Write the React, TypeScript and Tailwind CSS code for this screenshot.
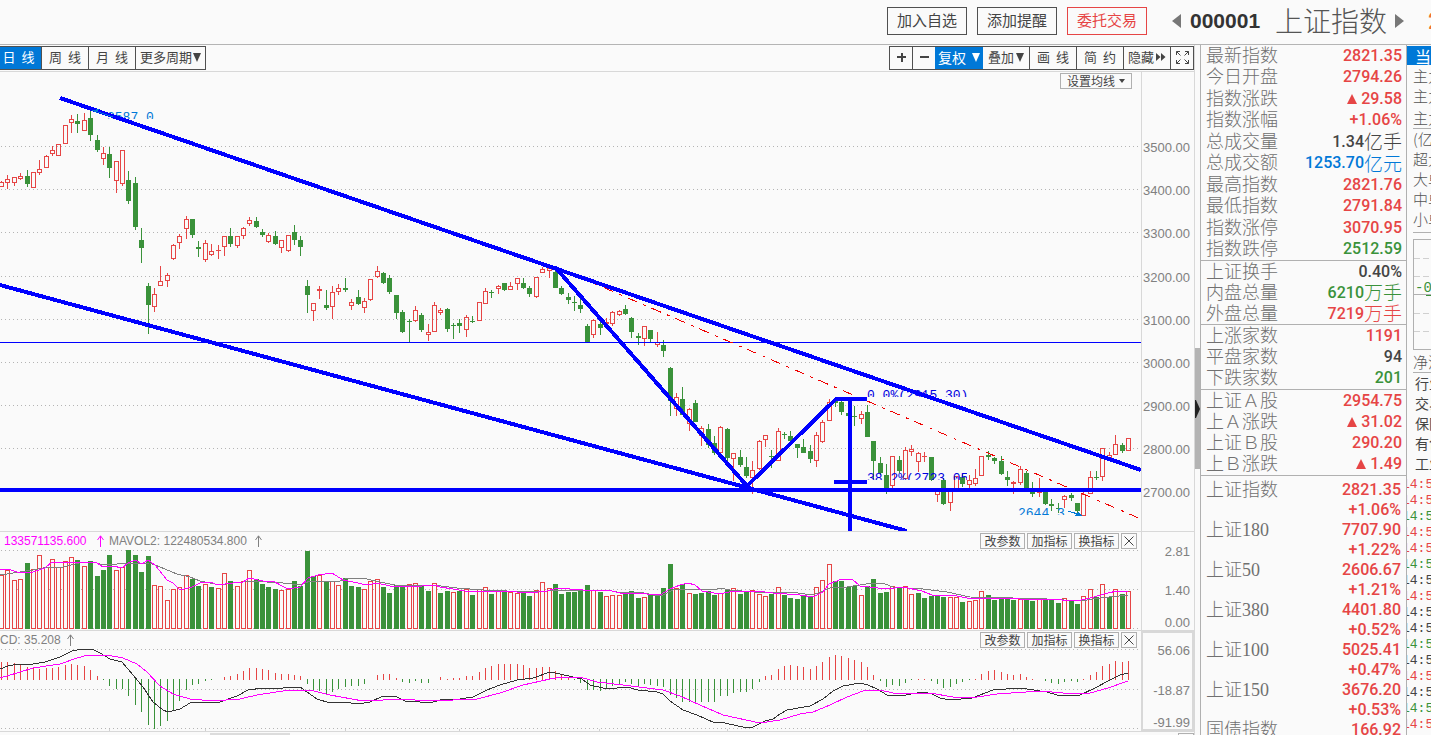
import type { ReactNode } from "react";
import clsx from "clsx";

type Tone = "up" | "down" | "flat" | "info";

// [direction, high, body top, body bottom, low] on the price canvas
type Candle = [number, number, number, number, number];

const candles: Candle[] = [
  [1, 181, 182, 187, 187], [1, 175, 179, 183, 189], [1, 177, 177, 183, 186], [1, 173, 176, 179, 180],
  [0, 170, 176, 184, 187], [1, 172, 172, 188, 188], [1, 160, 169, 173, 175], [1, 155, 156, 168, 168],
  [1, 146, 150, 154, 156], [1, 144, 144, 156, 156], [1, 125, 125, 144, 144], [1, 115, 119, 123, 133],
  [0, 114, 121, 124, 133], [1, 113, 120, 131, 131], [0, 111, 118, 135, 141], [0, 135, 140, 150, 152],
  [1, 147, 153, 159, 165], [0, 147, 154, 168, 178], [1, 161, 161, 181, 193], [1, 150, 150, 184, 186],
  [0, 171, 180, 201, 204], [0, 177, 183, 227, 230], [0, 228, 240, 248, 263], [0, 283, 286, 305, 334],
  [1, 288, 294, 307, 312], [1, 266, 281, 286, 286], [1, 273, 275, 281, 287], [1, 244, 245, 259, 260],
  [1, 234, 236, 243, 249], [1, 216, 219, 229, 239], [0, 219, 219, 235, 238], [0, 241, 247, 249, 257],
  [1, 240, 243, 260, 262], [1, 244, 251, 255, 256], [1, 245, 250, 251, 259], [1, 236, 236, 247, 256],
  [0, 228, 236, 244, 247], [1, 236, 236, 246, 248], [1, 227, 228, 236, 239], [1, 217, 220, 224, 226],
  [0, 217, 221, 227, 228], [0, 229, 232, 235, 237], [1, 233, 235, 242, 243], [0, 231, 236, 244, 245],
  [1, 240, 240, 248, 253], [1, 235, 235, 251, 252], [0, 225, 232, 240, 245], [0, 236, 240, 247, 256],
  [0, 280, 286, 295, 313], [1, 303, 303, 311, 321], [1, 286, 289, 291, 299], [0, 290, 305, 308, 310],
  [1, 286, 292, 307, 319], [1, 284, 288, 292, 295], [0, 278, 288, 290, 292], [1, 299, 302, 306, 310],
  [0, 290, 297, 304, 305], [1, 298, 301, 308, 313], [1, 279, 279, 300, 301], [1, 266, 271, 277, 278],
  [0, 272, 273, 283, 284], [0, 275, 278, 292, 294], [0, 295, 295, 313, 319], [0, 310, 312, 332, 333],
  [0, 319, 321, 322, 342], [1, 306, 310, 321, 322], [0, 313, 315, 330, 332], [1, 324, 332, 335, 341],
  [1, 302, 305, 332, 332], [1, 308, 310, 313, 315], [0, 308, 309, 329, 332], [0, 323, 325, 326, 339],
  [0, 319, 323, 326, 333], [1, 315, 317, 330, 337], [0, 316, 321, 322, 323], [1, 302, 302, 321, 321],
  [1, 288, 291, 304, 304], [0, 290, 292, 293, 298], [1, 285, 286, 289, 294], [0, 283, 283, 290, 291],
  [1, 282, 286, 290, 290], [1, 278, 278, 284, 290], [0, 278, 283, 288, 289], [0, 286, 288, 294, 297],
  [1, 277, 277, 297, 298], [1, 267, 269, 273, 273], [1, 268, 268, 271, 278], [0, 270, 272, 288, 288],
  [0, 286, 288, 294, 295], [0, 293, 297, 300, 304], [0, 296, 302, 303, 311], [0, 299, 305, 309, 313],
  [0, 324, 326, 342, 342], [1, 319, 320, 335, 338], [0, 320, 324, 328, 335], [1, 318, 322, 324, 326],
  [1, 311, 312, 324, 326], [1, 310, 311, 315, 316], [0, 305, 309, 314, 315], [0, 317, 318, 332, 338],
  [0, 333, 336, 338, 345], [1, 326, 326, 339, 346], [0, 330, 330, 339, 342], [1, 332, 342, 345, 347],
  [0, 340, 345, 351, 357], [0, 367, 368, 401, 416], [1, 393, 397, 409, 416], [0, 387, 399, 415, 415],
  [1, 408, 409, 424, 431], [0, 400, 403, 422, 422], [1, 426, 428, 436, 446], [0, 424, 429, 445, 448],
  [0, 436, 443, 453, 455], [1, 426, 427, 453, 454], [0, 428, 429, 458, 462], [1, 453, 453, 459, 481],
  [0, 450, 457, 465, 467], [0, 457, 467, 476, 478], [1, 461, 470, 478, 494], [1, 440, 441, 469, 470],
  [1, 435, 435, 440, 447], [0, 450, 456, 457, 468], [1, 428, 431, 461, 461], [0, 432, 434, 435, 439],
  [0, 431, 436, 441, 441], [0, 444, 444, 448, 458], [0, 439, 447, 453, 453], [0, 445, 451, 459, 463],
  [1, 432, 435, 461, 467], [1, 420, 422, 442, 443], [1, 399, 402, 421, 421], [0, 398, 401, 403, 407],
  [0, 401, 402, 412, 415], [0, 413, 413, 416, 416], [0, 406, 416, 417, 426], [1, 411, 414, 419, 424],
  [0, 405, 412, 437, 437], [0, 441, 441, 461, 479], [0, 457, 463, 473, 475], [0, 464, 475, 488, 494],
  [1, 456, 456, 486, 488], [0, 456, 460, 471, 473], [1, 447, 450, 479, 479], [1, 445, 449, 452, 456],
  [1, 452, 453, 462, 472], [1, 452, 456, 457, 462], [0, 457, 457, 480, 481], [1, 490, 490, 495, 502],
  [0, 478, 480, 504, 505], [1, 490, 490, 503, 511], [1, 476, 476, 490, 490], [0, 474, 477, 484, 487],
  [1, 475, 480, 485, 488], [1, 469, 478, 484, 486], [1, 456, 456, 476, 476], [0, 451, 455, 457, 460],
  [0, 457, 458, 461, 464], [0, 456, 461, 474, 475], [0, 471, 477, 480, 486], [1, 481, 482, 484, 494],
  [1, 466, 469, 483, 485], [0, 471, 473, 488, 488], [0, 482, 488, 494, 497], [1, 478, 492, 493, 497],
  [0, 491, 492, 504, 505], [0, 499, 504, 506, 511], [0, 503, 508, 509, 513], [1, 495, 496, 500, 508],
  [0, 493, 495, 498, 501], [0, 503, 503, 511, 515], [1, 490, 494, 516, 516], [1, 471, 477, 494, 494],
  [0, 471, 477, 478, 480], [1, 448, 448, 477, 481], [1, 452, 455, 458, 460], [1, 435, 444, 455, 455],
  [0, 443, 445, 451, 453], [1, 438, 438, 451, 451],
];

// bar heights, negative on a falling day
const volumes = [
  54, 59, 49, 50, -66, 60, 74, 62, 70, 62, 68, 72, -69, 63, -68, -53, -59, -74, 59, 62, -79, -74, -57, -73, 44,
  43, 29, 40, 42, 54, -50, -43, 45, -42, 41, 56, -48, 43, 48, 59, -50, -45, -42, -40, 39, 40, -48, -43, -78, -53,
  54, -48, 48, 44, -51, -43, -42, 40, 48, 50, -42, -36, -44, -43, 45, 46, -44, -38, 46, -36, -38, 37, -38, 40, -34,
  40, 42, -35, 38, -38, 37, 36, -36, -33, 39, 47, 41, -45, -35, -37, -37, -39, -44, 39, -37, 33, 34, 34, -36, -38,
  -31, 32, -35, -34, -41, -65, 41, -45, 36, -35, -36, -38, -34, 36, -40, 41, -35, -37, 39, 35, 33, -35, 42, -34, -31,
  -30, -34, -33, 42, 49, 65, -48, -48, -42, -43, 34, -43, -50, -36, -37, 43, -42, 43, 35, -36, -31, -33, -34, -32, 32,
  32, -27, 28, 29, 38, -34, -29, -31, -31, -29, 30, -30, -28, 30, -30, -29, -26, 31, -29, -25, 33, 40, -32, 45, -32,
  40, -35, 38,
];

const macd = [
  18, 18, 17, 16, 13, 12, 11, 12, 12, 13, 15, 16, 15, 14, 10, 4, -1, -7, -10, -10, -17, -26, -33, -46, -50,
  -47, -42, -32, -22, -11, -6, -5, -2, -1, 0, 3, 4, 6, 9, 12, 12, 11, 10, 7, 6, 6, 5, 4, -5, -11,
  -12, -15, -13, -10, -8, -7, -7, -5, 0, 5, 6, 6, 2, -3, -4, -2, -4, -4, 0, 3, 1, 2, 2, 4, 4,
  8, 12, 14, 16, 16, 16, 16, 15, 12, 12, 13, 13, 9, 6, 2, -1, -4, -11, -11, -12, -10, -7, -5, -3, -5,
  -7, -5, -6, -7, -8, -16, -19, -23, -23, -23, -23, -23, -23, -17, -17, -14, -13, -13, -10, -3, 4, 5, 11, 14, 15,
  14, 13, 11, 14, 18, 23, 25, 24, 22, 20, 18, 13, 5, -2, -8, -6, -7, -4, -1, 1, 1, -2, -5, -9, -8,
  -5, -3, -1, 1, 6, 9, 10, 8, 6, 5, 6, 3, 1, 0, -2, -4, -5, -3, -2, -3, 1, 5, 8, 14, 16,
  19, 18, 19,
];

const mavol1 =
  "0,569 8,569 17,572 25,573 33,572 45,568 52,562 65,563 72,562 87,562 97,563 103,567 113,566 122,568 128,563 135,560 142,564 148,560 155,565 167,580 173,583 180,590 192,587 200,583 210,582 218,585 233,583 243,582 249,578 263,581 273,581 282,586 288,589 300,587 308,578 318,575 332,573 343,580 353,582 367,585 377,583 390,586 410,587 435,585 440,587 453,589 465,591 503,591 530,593 547,591 557,588 570,589 583,590 608,590 620,593 647,594 660,595 670,589 680,585 688,583 695,585 702,591 720,594 733,591 757,591 773,593 800,595 813,597 823,592 829,584 842,579 852,579 860,586 887,589 903,587 922,591 932,595 957,596 972,599 997,598 1020,599 1047,599 1077,601 1090,598 1108,593 1117,591 1128,592";
const mavol2 =
  "0,575 20,572 33,570 43,568 63,567 83,562 97,563 103,565 117,564 150,563 160,567 177,574 190,577 200,581 220,585 233,583 253,581 267,582 283,583 300,585 310,581 340,581 348,578 367,579 380,582 400,586 433,585 457,588 483,590 530,592 547,591 557,590 607,590 617,592 640,592 653,595 663,595 673,590 683,589 717,589 720,588 730,590 767,593 790,592 813,595 830,588 847,587 873,583 885,584 893,587 923,589 947,592 970,597 1013,598 1047,599 1080,601 1100,598 1128,595";
const dif =
  "0,669 8,666 18,664 33,664 45,662 60,657 72,651 83,649 92,649 100,653 110,659 122,662 133,675 143,687 153,702 163,710 168,712 180,709 190,703 207,702 220,702 237,696 248,690 263,688 283,688 290,687 300,687 307,692 317,699 330,703 343,702 358,704 370,702 383,696 397,697 405,701 420,702 430,703 440,700 460,699 473,697 487,690 500,685 517,680 533,678 550,672 560,674 573,677 582,679 590,685 603,688 617,688 627,687 638,690 657,692 663,694 670,701 683,710 697,715 715,723 720,722 743,727 753,727 765,721 773,719 780,714 787,710 810,706 823,699 833,691 843,686 860,683 868,685 877,689 887,695 900,696 923,692 932,694 940,698 950,700 972,698 980,695 993,690 1020,688 1047,692 1057,695 1080,695 1095,688 1108,681 1120,675 1128,673";
const dea =
  "0,678 17,673 33,668 60,664 77,658 88,655 107,655 123,658 137,664 147,672 160,686 173,694 190,699 213,701 240,699 257,695 283,691 310,690 330,695 363,701 383,700 400,699 430,701 477,699 500,693 523,685 550,679 563,677 580,677 597,682 623,685 647,688 663,690 680,696 700,705 723,715 760,723 780,720 800,714 813,712 830,705 847,697 863,691 880,690 893,693 930,693 953,697 977,697 997,694 1040,691 1063,693 1090,693 1108,688 1128,681";

const RED = "#e64545";
const GREEN = "#3a923a";
const GRID = "#b4b4b4";

const barX = (i: number) => Math.floor(1.6 + 6.366 * i);

const toneText: Record<Tone, string> = {
  up: "text-[#e64545]",
  down: "text-[#3a923a]",
  flat: "text-[#444444]",
  info: "text-[#0078d7]",
};

const cjk = "font-['Noto_Sans_CJK_SC',sans-serif]";
const song = "font-['Liberation_Serif','Noto_Sans_CJK_SC',serif] font-light";
const toolButton =
  "flex h-full items-center justify-center border-l border-[#505050] pb-0.5 text-[13px] leading-5 whitespace-nowrap text-[#444444] cursor-pointer";
const smallButton =
  "flex h-4 items-center justify-center border border-[#b0b0b0] bg-[#fafafa] text-xs leading-4 whitespace-nowrap text-[#444444] cursor-pointer";

interface Row {
  label: string;
  value: string;
  unit?: string;
  tone: Tone;
  rising?: boolean;
}

const sections: { height: string; rows: Row[] }[] = [
  {
    height: "h-[216px]",
    rows: [
      { label: "最新指数", value: "2821.35", tone: "up" },
      { label: "今日开盘", value: "2794.26", tone: "up" },
      { label: "指数涨跌", value: "29.58", tone: "up", rising: true },
      { label: "指数涨幅", value: "+1.06%", tone: "up" },
      { label: "总成交量", value: "1.34", unit: "亿手", tone: "flat" },
      { label: "总成交额", value: "1253.70", unit: "亿元", tone: "info" },
      { label: "最高指数", value: "2821.76", tone: "up" },
      { label: "最低指数", value: "2791.84", tone: "up" },
      { label: "指数涨停", value: "3070.95", tone: "up" },
      { label: "指数跌停", value: "2512.59", tone: "down" },
    ],
  },
  {
    height: "h-16",
    rows: [
      { label: "上证换手", value: "0.40%", tone: "flat" },
      { label: "内盘总量", value: "6210", unit: "万手", tone: "down" },
      { label: "外盘总量", value: "7219", unit: "万手", tone: "up" },
    ],
  },
  {
    height: "h-[65px]",
    rows: [
      { label: "上涨家数", value: "1191", tone: "up" },
      { label: "平盘家数", value: "94", tone: "flat" },
      { label: "下跌家数", value: "201", tone: "down" },
    ],
  },
  {
    height: "h-[86px]",
    rows: [
      { label: "上证Ａ股", value: "2954.75", tone: "up" },
      { label: "上Ａ涨跌", value: "31.02", tone: "up", rising: true },
      { label: "上证Ｂ股", value: "290.20", tone: "up" },
      { label: "上Ｂ涨跌", value: "1.49", tone: "up", rising: true },
    ],
  },
];

const indices = [
  ["上证指数", "2821.35", "+1.06%"],
  ["上证180", "7707.90", "+1.22%"],
  ["上证50", "2606.67", "+1.21%"],
  ["上证380", "4401.80", "+0.52%"],
  ["上证100", "5025.41", "+0.47%"],
  ["上证150", "3676.20", "+0.53%"],
  ["国债指数", "166.92", ""],
];

const ticks: Tone[] = [
  "up", "up", "down", "up", "up", "down", "flat", "up", "flat", "flat", "down", "flat", "up", "flat", "down", "up",
];

function GridLine({ y }: { y: number }) {
  return <line x1="1" x2="1140" y1={y + 0.5} y2={y + 0.5} stroke={GRID} strokeDasharray="1 3" />;
}

function Axis({ labels, top, height }: { labels: [string, number][]; top: number; height: number }) {
  return (
    <g>
      <rect x="1141" y={top} width="1" height={height} fill="#d8d8d8" />
      {labels.map(([text, y]) => (
        <text
          key={text}
          x="1190"
          y={y}
          textAnchor="end"
          fontSize="13"
          fill="#808080"
          className="font-['Liberation_Sans',sans-serif]"
        >
          {text}
        </text>
      ))}
    </g>
  );
}

function Candles() {
  return (
    <g>
      {candles.map(([rising, high, top, bottom, low], i) => {
        const x = barX(i);
        const color = rising ? RED : GREEN;
        const hollow = rising === 1 && bottom - top > 2;
        return (
          <g key={i} fill={color}>
            <rect x={x} y={high} width="1" height={top - high} />
            <rect x={x} y={bottom} width="1" height={low - bottom} />
            {hollow ? (
              <rect x={x - 1.5} y={top + 0.5} width="4" height={bottom - top - 1} fill="none" stroke={color} />
            ) : (
              <rect x={x - 2} y={top} width="5" height={bottom - top} />
            )}
          </g>
        );
      })}
    </g>
  );
}

function PriceChart() {
  return (
    <svg
      width="1194"
      height="459"
      viewBox="0 72 1194 459"
      shapeRendering="crispEdges"
      className="shrink-0"
      role="img"
      aria-label="上证指数日线"
    >
      <defs>
        <clipPath id="labels">
          <rect x="0" y="111" width="300" height="8" />
          <rect x="860" y="389" width="110" height="8" />
          <rect x="860" y="472" width="107" height="8" />
          <rect x="1010" y="507" width="100" height="8" />
        </clipPath>
      </defs>
      {[146, 189, 232, 276, 319, 362, 405, 448, 491].map((y) => (
        <GridLine key={y} y={y} />
      ))}
      <Candles />
      <g clipPath="url(#labels)" fontSize="13" className="font-['Liberation_Mono',monospace]">
        <text x="107" y="121" fill="#0078d7">3587.0</text>
        <text x="1018" y="517" fill="#0078d7">2644.3</text>
        <text x="867" y="399" fill="#0000e0">0.0%(2915.30)</text>
        <text x="867" y="482" fill="#0000e0">38.2%(2723.05</text>
      </g>
      <line x1="0" x2="1141" y1="342.5" y2="342.5" stroke="#0000ff" />
      <line x1="556" y1="267" x2="1141" y2="519" stroke="#f00000" strokeDasharray="10 7 3 6" />
      <g fill="none" stroke="#0000ff" strokeWidth="4">
        <line x1="60" y1="98" x2="1141" y2="470" />
        <line x1="0" y1="285" x2="907" y2="531" />
        <line x1="0" y1="490" x2="1141" y2="490" />
        <polyline points="555,267 747,486 836,399 867,399" />
        <line x1="850" y1="399" x2="850" y2="531" />
        <line x1="834" y1="482" x2="867" y2="482" />
      </g>
      <g stroke="#0078d7" fill="#0078d7">
        <line x1="92" y1="110" x2="113" y2="117" />
        <path d="M92 110l7-1-2 4z" stroke="none" />
        <line x1="1068" y1="511" x2="1081" y2="515" />
        <path d="M1083 516h-8l3-4z" stroke="none" />
      </g>
      <Axis
        top={72}
        height={459}
        labels={[
          ["3500.00", 152],
          ["3400.00", 195],
          ["3300.00", 238],
          ["3200.00", 282],
          ["3100.00", 325],
          ["3000.00", 368],
          ["2900.00", 411],
          ["2800.00", 454],
          ["2700.00", 497],
        ]}
      />
    </svg>
  );
}

function VolumeChart() {
  return (
    <svg
      width="1194"
      height="98"
      viewBox="0 532 1194 98"
      shapeRendering="crispEdges"
      className="shrink-0"
      role="img"
      aria-label="成交量"
    >
      {[550, 589, 628].map((y) => (
        <GridLine key={y} y={y} />
      ))}
      {volumes.map((v, i) =>
        v > 0 ? (
          <rect key={i} x={barX(i) - 1.5} y={629.5 - v} width="4" height={v - 1} fill="#fafafa" stroke={RED} />
        ) : (
          <rect key={i} x={barX(i) - 2} y={629 + v} width="5" height={-v} fill={GREEN} />
        ),
      )}
      <polyline points={mavol2} fill="none" stroke="#808080" />
      <polyline points={mavol1} fill="none" stroke="#ff00ff" />
      <Axis
        top={532}
        height={98}
        labels={[
          ["2.81", 556],
          ["1.40", 595],
          ["0.00", 627],
        ]}
      />
    </svg>
  );
}

function MacdChart() {
  return (
    <svg
      width="1194"
      height="100"
      viewBox="0 631 1194 100"
      shapeRendering="crispEdges"
      className="shrink-0"
      role="img"
      aria-label="MACD"
    >
      {[649, 689, 728].map((y) => (
        <GridLine key={y} y={y} />
      ))}
      {macd.map((v, i) => (
        <rect
          key={i}
          x={barX(i)}
          y={v > 0 ? 680 - v : 679}
          width="1"
          height={Math.abs(v)}
          fill={v > 0 ? RED : GREEN}
        />
      ))}
      <polyline points={dif} fill="none" stroke="#333333" />
      <polyline points={dea} fill="none" stroke="#ff00ff" />
      {[109, 205, 345, 459, 599, 727, 867, 1013].map((x) => (
        <rect key={x} x={x} y="729" width="1" height="2" fill="#d0d0d0" />
      ))}
      <rect x="1142" y="631.5" width="51" height="98" fill="none" stroke="#d8d8d8" strokeWidth="2" />
      <Axis
        top={631}
        height={100}
        labels={[
          ["56.06", 655],
          ["-18.87", 695],
          ["-91.99", 727],
        ]}
      />
    </svg>
  );
}

function UpArrow() {
  return (
    <svg width="7" height="12" viewBox="0 0 7 12" fill="none" stroke="currentColor" aria-hidden="true">
      <path d="M3.5 12V1M0.5 5L3.5 0.8L6.5 5" />
    </svg>
  );
}

function Panel({ legend, children }: { legend: ReactNode; children: ReactNode }) {
  return (
    <section className="relative flex justify-end overflow-hidden border-b border-[#d8d8d8]">
      {children}
      <div className="absolute top-[3px] left-0 flex h-3 items-center font-['Liberation_Sans',sans-serif] text-xs leading-3 whitespace-nowrap">
        {legend}
      </div>
      <div className="absolute top-px right-[57px] flex gap-0.5">
        {["改参数", "加指标", "换指标"].map((name) => (
          <button key={name} type="button" className={clsx(smallButton, "w-[45px]")}>
            {name}
          </button>
        ))}
        <button type="button" aria-label="关闭" className={clsx(smallButton, "w-4")}>
          <svg width="10" height="10" viewBox="0 0 10 10" stroke="currentColor" aria-hidden="true">
            <path d="M0.5 0.5l9 9M9.5 0.5l-9 9" />
          </svg>
        </button>
      </div>
    </section>
  );
}

function Caret() {
  return (
    <svg width="8" height="9" viewBox="0 0 8 9" fill="currentColor" aria-hidden="true">
      <path d="M0 0h8L4 9z" />
    </svg>
  );
}

function Header() {
  return (
    <header className="flex h-[45px] shrink-0 items-start justify-end border-b border-[#b4b4b4]">
      <div className="flex gap-[10px] pt-[7px]">
        {["加入自选", "添加提醒", "委托交易"].map((name) => (
          <button
            key={name}
            type="button"
            className={clsx(
              "h-7 w-20 cursor-pointer border pb-0.5 text-[15px] leading-6 whitespace-nowrap",
              name === "委托交易" ? "border-[#e64545] text-[#e64545]" : "border-[#505050] text-[#444444]",
            )}
          >
            {name}
          </button>
        ))}
      </div>
      <div className="flex h-[42px] items-center">
        <button type="button" aria-label="上一个" className="ml-[25px] w-[9px] cursor-pointer text-[#777777]">
          <svg width="9" height="14" viewBox="0 0 9 14" fill="currentColor">
            <path d="M9 0v14L0 7z" />
          </svg>
        </button>
        <span className="ml-[9px] w-[71px] font-['Liberation_Sans',sans-serif] text-[21px] leading-6 font-bold text-[#333333]">
          000001
        </span>
        <h1 className="ml-[14px] pb-0.5 text-[28px] leading-8 font-light whitespace-nowrap text-[#555555]">
          上证指数
        </h1>
        <button type="button" aria-label="下一个" className="ml-2 w-[9px] cursor-pointer text-[#777777]">
          <svg width="9" height="14" viewBox="0 0 9 14" fill="currentColor">
            <path d="M0 0v14L9 7z" />
          </svg>
        </button>
        <span className="ml-6 w-[3px] overflow-hidden font-['Roboto',sans-serif] text-2xl font-medium text-[#f07030]">
          2821.35
        </span>
      </div>
    </header>
  );
}

function Toolbar() {
  return (
    <div className="flex h-[27px] justify-between border-b border-[#d8d8d8] pt-px pb-px">
      <div className="flex border-y border-r border-[#505050]">
        <button
          type="button"
          className="h-full w-[41px] cursor-pointer bg-[#0078d7] pr-1 pb-0.5 text-[13px] leading-5 whitespace-pre text-white"
        >
          日{"  "}线
        </button>
        <button type="button" className={clsx(toolButton, "w-[47px] whitespace-pre")}>
          周{"  "}线
        </button>
        <button type="button" className={clsx(toolButton, "w-[47px] whitespace-pre")}>
          月{"  "}线
        </button>
        <button type="button" className={clsx(toolButton, "w-[70px] gap-px")}>
          更多周期
          <Caret />
        </button>
      </div>
      <div className="flex border-y border-r border-[#505050]">
        <button type="button" aria-label="放大" className={clsx(toolButton, "w-[23px]")}>
          <svg width="9" height="10" viewBox="0 0 9 10" fill="currentColor" shapeRendering="crispEdges">
            <path d="M0 4h9v2H0zM4 0.5h1.500v9H4z" />
          </svg>
        </button>
        <button type="button" aria-label="缩小" className={clsx(toolButton, "w-[23px]")}>
          <svg width="9" height="10" viewBox="0 0 9 10" fill="currentColor" shapeRendering="crispEdges">
            <path d="M0 4h9v2H0z" />
          </svg>
        </button>
        <button
          type="button"
          className="flex h-full w-12 cursor-pointer items-center justify-center gap-1.5 bg-[#0078d7] pb-0.5 text-sm leading-5 whitespace-nowrap text-white"
        >
          复权
          <Caret />
        </button>
        <button type="button" className={clsx(toolButton, "w-[46px] gap-0.5 border-l-0 text-sm")}>
          叠加
          <Caret />
        </button>
        <button type="button" className={clsx(toolButton, "w-[47px] whitespace-pre")}>
          画{"  "}线
        </button>
        <button type="button" className={clsx(toolButton, "w-[47px] whitespace-pre")}>
          简{"  "}约
        </button>
        <button type="button" className={clsx(toolButton, "w-[47px] gap-px")}>
          隐藏
          <svg width="11" height="8" viewBox="0 0 11 8" fill="currentColor" aria-hidden="true">
            <path d="M1 0l4.500 4L1 8zM6 0l4.500 4L6 8z" />
          </svg>
        </button>
        <button type="button" aria-label="全屏" className={clsx(toolButton, "w-[23px]")}>
          <svg width="13" height="13" viewBox="0 0 13 13" fill="none" stroke="currentColor">
            <path d="M0.500 4V0.500H4M0.500 0.500L4.500 4.500M9 0.500h3.500V4M12.500 0.500L8.500 4.500M0.500 9v3.500H4M0.500 12.500L4.500 8.500M12.500 9v3.500H9M12.500 12.500L8.500 8.500" />
          </svg>
        </button>
      </div>
    </div>
  );
}

function Quotes() {
  return (
    <aside className="w-[206px] shrink-0 overflow-hidden border-l border-[#b0b0b0]">
      {sections.map(({ height, rows }) => (
        <dl key={rows[0].label} className={clsx("grid auto-rows-fr border-b border-[#b0b0b0] pr-1 pl-[5px]", height)}>
          {rows.map((row) => (
            <div key={row.label} className="flex items-center justify-between whitespace-nowrap">
              <dt className={clsx(song, "text-lg leading-5 text-[#707070]")}>{row.label}</dt>
              <dd className={clsx("flex items-center", toneText[row.tone])}>
                {row.rising && (
                  <svg width="10" height="10" viewBox="0 0 10 10" fill="currentColor" className="mr-1" aria-hidden="true">
                    <path d="M5 0l5 10H0z" />
                  </svg>
                )}
                <span className="font-['Roboto',sans-serif] text-base leading-5 font-medium">{row.value}</span>
                {row.unit && <span className="pb-px text-[19px] leading-5 font-light">{row.unit}</span>}
              </dd>
            </div>
          ))}
        </dl>
      ))}
      <ul className="pt-1 pr-[5px] pl-[5px]">
        {indices.map(([name, value, change]) => (
          <li key={name} className="flex h-10 items-start justify-between whitespace-nowrap">
            <span className={clsx(song, "text-lg leading-5 text-[#707070]")}>{name}</span>
            <span className="flex flex-col items-end font-['Roboto',sans-serif] text-base leading-5 font-medium text-[#e64545]">
              <span>{value}</span>
              <span>{change}</span>
            </span>
          </li>
        ))}
      </ul>
    </aside>
  );
}

function SidePanel() {
  return (
    <aside className="w-[25px] shrink-0 overflow-hidden border-l border-[#b0b0b0] text-[15px] leading-5 whitespace-nowrap text-[#555555]">
      <button type="button" className="mt-px block h-[19px] w-40 cursor-pointer bg-[#0078d7] pl-2 text-left text-base leading-4 text-white">
        当日
      </button>
      <div className="pl-1.5 font-light">
        <p className="pt-px">主力流入</p>
        <p>主力流出</p>
        <p className="mt-0.5 border-b border-[#b0b0b0]">主力净额</p>
        <p>(亿元)</p>
        <p>超大单</p>
        <p>大单</p>
        <p>中单</p>
        <p className="border-b border-[#b0b0b0] pb-[3px]">小单</p>
        <div className="mt-1.5 h-[111px] border border-r-0 border-[#b0b0b0]">
          <svg width="18" height="109" viewBox="0 0 18 109" fill="none" stroke="#d0d0d0" shapeRendering="crispEdges">
            <path d="M0 18.500h18M0 36.500h18M0 73.500h18M0 91.500h18" strokeDasharray="6 3" />
            <path d="M0 54.500h18" stroke="#b0b0b0" />
            <path d="M12 55.500h6" stroke={GREEN} />
            <text x="1" y="52" fontSize="14" fill={GREEN} stroke="none" className="font-['Liberation_Mono',monospace]">
              -0
            </text>
          </svg>
        </div>
        <p className="mt-0.5 border-b border-[#b0b0b0]">净流入</p>
      </div>
      <ul className="pl-2 text-sm leading-5 text-[#444444]">
        <li>行业</li>
        <li>交易</li>
        <li>保险</li>
        <li>有色</li>
        <li>工业</li>
      </ul>
      <ul className="mt-1 ml-[-5px] font-['Liberation_Mono',monospace] text-[13px] leading-4">
        {ticks.map((tone, i) => (
          <li key={i} className={toneText[tone]}>
            14:5
          </li>
        ))}
      </ul>
    </aside>
  );
}

export default function App() {
  return (
    <div className={clsx(cjk, "flex h-screen flex-col overflow-hidden bg-[#fafafa]")}>
      <Header />
      <main className="flex min-h-0 flex-1">
        <div className="min-w-0 flex-1 overflow-hidden border-r border-[#d8d8d8]">
          <Toolbar />
          <section className="relative flex justify-end overflow-hidden border-b border-[#d8d8d8]">
            <PriceChart />
            <button type="button" className={clsx(smallButton, "absolute top-px right-[62px] w-[72px] gap-1")}>
              设置均线
              <svg width="6" height="4" viewBox="0 0 6 4" fill="currentColor" aria-hidden="true">
                <path d="M0 0h6L3 4z" />
              </svg>
            </button>
          </section>
          <Panel
            legend={
              <>
                <span className="flex w-[109px] items-center gap-2.5 pl-1 text-[#ff00ff]">
                  133571135.600
                  <UpArrow />
                </span>
                <span className="flex items-center gap-2 text-[#808080]">
                  MAVOL2: 122480534.800
                  <UpArrow />
                </span>
              </>
            }
          >
            <VolumeChart />
          </Panel>
          <Panel
            legend={
              <span className="flex items-center gap-1.5 text-[#808080]">
                CD: 35.208
                <UpArrow />
              </span>
            }
          >
            <MacdChart />
          </Panel>
          <div className="flex h-[3px] justify-between pt-px pl-[210px]">
            <div className="w-20 bg-[#dcdcdc]" />
            <div className="w-4 border border-b-0 border-[#b0b0b0]" />
          </div>
        </div>
        <div className="flex w-[5px] shrink-0 flex-col pt-[303px]">
          <div className="flex h-[121px] items-center bg-[#b4b4b4]">
            <svg width="5" height="18" viewBox="0 0 5 18" fill="#222222" aria-hidden="true">
              <path d="M0 0h1l4 9-4 9H0z" />
            </svg>
          </div>
        </div>
        <Quotes />
        <SidePanel />
      </main>
    </div>
  );
}
